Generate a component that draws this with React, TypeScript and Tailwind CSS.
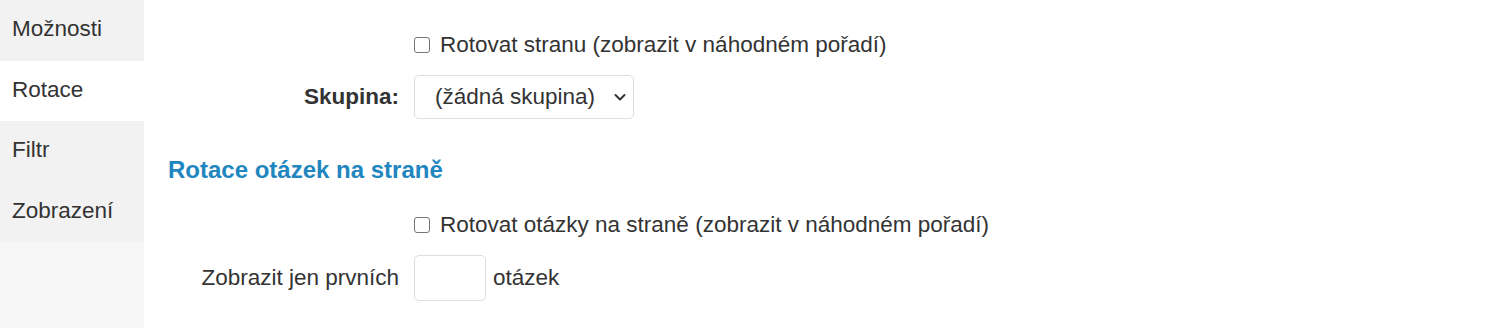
import React from 'react';

const tabs = [
  { label: 'Možnosti', active: false },
  { label: 'Rotace', active: true },
  { label: 'Filtr', active: false },
  { label: 'Zobrazení', active: false },
];

function Checkbox() {
  return <span className="inline-block w-[16px] h-[16px] border border-[#767676] rounded-[3px] bg-white" />;
}

export default function App() {
  return (
    <div className="flex w-[1492px] h-[328px] bg-white text-[#333333] text-[22.5px] font-['Liberation_Sans'] leading-[1.25]">
      <div className="w-[144px] flex flex-col bg-[#f7f7f7]">
        {tabs.map((t) => (
          <div
            key={t.label}
            className={
              'h-[60.5px] flex items-center px-[12px] pb-[2px] ' +
              (t.active ? 'bg-white' : 'bg-[#f2f2f2]')
            }
          >
            {t.label}
          </div>
        ))}
      </div>

      <div className="flex-1 flex flex-col pl-[24px] pt-[31px]">
        <div className="flex items-center pl-[246px] h-[28px]">
          <label className="flex items-center gap-[10px]">
            <Checkbox />
            <span>Rotovat stranu (zobrazit v náhodném pořadí)</span>
          </label>
        </div>

        <div className="flex items-center mt-[16px]">
          <div className="w-[246px] text-right pr-[15px] font-bold">Skupina:</div>
          <div className="w-[220px] h-[44px] border border-[#dddddd] rounded-[5px] flex items-center justify-between pl-[20px] pr-[5px]">
            <span>(žádná skupina)</span>
            <svg width="16" height="16" viewBox="0 0 16 16" fill="none">
              <path d="M3.5 6l4.5 4.5L12.5 6" stroke="#333" strokeWidth="2" strokeLinecap="round" strokeLinejoin="round" />
            </svg>
          </div>
        </div>

        <h3 className="mt-[36px] text-[24px] font-bold text-[#1f86bf] leading-[30px]">
          Rotace otázek na straně
        </h3>

        <div className="flex items-center pl-[246px] h-[28px] mt-[26px]">
          <label className="flex items-center gap-[10px]">
            <Checkbox />
            <span>Rotovat otázky na straně (zobrazit v náhodném pořadí)</span>
          </label>
        </div>

        <div className="flex items-center mt-[16px]">
          <div className="w-[246px] text-right pr-[15px]">Zobrazit jen prvních</div>
          <div className="w-[72px] h-[46px] border border-[#dddddd] rounded-[5px] bg-white" />
          <span className="ml-[7px]">otázek</span>
        </div>
      </div>
    </div>
  );
}
